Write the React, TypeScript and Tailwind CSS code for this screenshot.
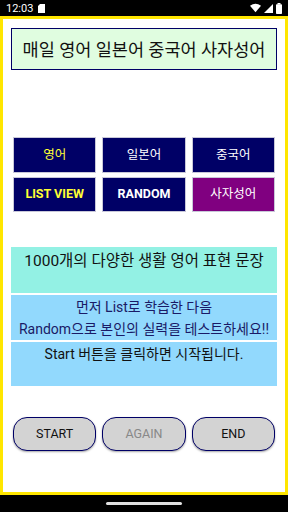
import { useState } from "react";

const kr = { fontFamily: 'Roboto, "Noto Sans CJK KR", sans-serif' };

// status bar glyphs
function StatusIcons() {
  return (
    <div className="flex items-center gap-[3px] pr-[6px]">
      <svg width="11" height="10" viewBox="0 0 12 10">
        <path d="M0 2.5 Q6 -2 12 2.5 L6 9.5 Z" fill="white" />
      </svg>
      <svg width="9" height="9" viewBox="0 0 10 10">
        <path d="M10 0 L10 10 L0 10 Z" fill="white" />
      </svg>
      <svg width="6" height="11" viewBox="0 0 6 11">
        <rect x="1.5" y="0" width="3" height="1.5" fill="white" />
        <rect x="0" y="1.2" width="6" height="9.8" rx="0.8" fill="white" />
      </svg>
    </div>
  );
}

export default function App() {
  const [mode, setMode] = useState("영어");

  const topButtons = [
    { label: "영어", cls: "bg-[#000066] text-[#ffff33]" },
    { label: "일본어", cls: "bg-[#000066] text-white" },
    { label: "중국어", cls: "bg-[#000066] text-white" },
    { label: "LIST VIEW", cls: "bg-[#000066] text-[#ffff33] font-bold" },
    { label: "RANDOM", cls: "bg-[#000066] text-white font-bold" },
    { label: "사자성어", cls: "bg-[#800080] text-white" },
  ];

  return (
    <div className="w-[288px] h-[512px] flex flex-col bg-black overflow-hidden" style={kr}>
      {/* status bar */}
      <div className="h-[16px] flex items-center justify-between text-white">
        <div className="flex items-center gap-[5px] pl-[6px]">
          <span className="text-[11px] leading-none" style={{ fontFamily: "Roboto, sans-serif" }}>12:03</span>
          <svg width="7" height="9" viewBox="0 0 7 9">
            <path d="M2 0 H7 V9 H0 V2 Z" fill="white" />
          </svg>
        </div>
        <StatusIcons />
      </div>

      {/* main */}
      <div className="h-[479px] border-[3px] border-[#ffe600] bg-white flex flex-col">
        <div className="mx-[8px] mt-[9px] h-[42px] bg-[#e0fde0] border border-[#000066] flex items-center justify-center text-[17.5px] text-[#111] pt-[2px]">
          매일 영어 일본어 중국어 사자성어
        </div>

        <div className="mt-[67px] mx-[10px] grid grid-cols-3 gap-x-[6px] gap-y-[4px]">
          {topButtons.map((b, i) => (
            <button
              key={b.label}
              onClick={() => setMode(b.label)}
              className={`${i < 3 ? "h-[36px]" : "h-[35px]"} border border-[#c8c8d8] text-[12.5px] flex items-center justify-center ${b.cls}`}
            >
              {b.label}
            </button>
          ))}
        </div>

        <div className="mt-[35px] mx-[8px] flex flex-col gap-[2px]">
          <div className="h-[46px] bg-[#93f1e4] text-center text-[15.5px] text-[#111] pt-[3px]">
            1000개의 다양한 생활 영어 표현 문장
          </div>
          <div className="h-[45px] bg-[#92d9fd] text-center text-[14px] leading-[22px] text-[#1a1a66] pt-[1px]">
            <div>먼저 List로 학습한 다음</div>
            <div>Random으로 본인의 실력을 테스트하세요!!</div>
          </div>
          <div className="h-[44px] bg-[#92d9fd] text-center text-[14px] text-[#111] pt-[2px]">
            Start 버튼을 클릭하면 시작됩니다.
          </div>
        </div>

        <div className="mt-[31px] mx-[10px] grid grid-cols-3 gap-x-[6px]">
          <button className="h-[34px] rounded-[14px] bg-[#d3d3d3] border border-[#000066] shadow-[0_1px_2px_rgba(0,0,0,0.35)] text-[12.5px] text-[#111]">
            START
          </button>
          <button className="h-[34px] rounded-[14px] bg-[#d3d3d3] border border-[#000066] shadow-[0_1px_2px_rgba(0,0,0,0.35)] text-[12.5px] text-[#888]">
            AGAIN
          </button>
          <button className="h-[34px] rounded-[14px] bg-[#d3d3d3] border border-[#000066] shadow-[0_1px_2px_rgba(0,0,0,0.35)] text-[12.5px] text-[#111]">
            END
          </button>
        </div>
        <span className="hidden">{mode}</span>
      </div>

      {/* nav bar */}
      <div className="flex-1 flex items-center justify-center">
        <div className="w-[76px] h-[3px] rounded-full bg-[#e0e0e0]" />
      </div>
    </div>
  );
}
